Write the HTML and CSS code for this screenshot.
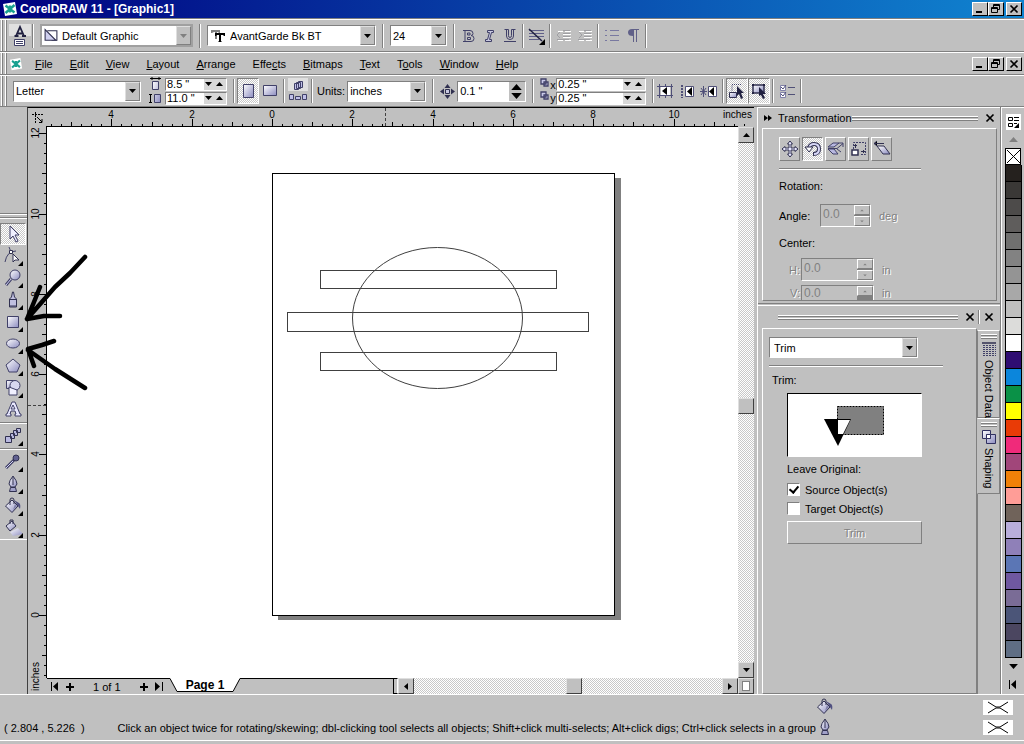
FILE: index.html
```html
<!DOCTYPE html>
<html lang="en">
<head>
  <meta charset="UTF-8">
  <meta name="viewport" content="width=device-width, initial-scale=1.0">
  <title>CorelDRAW 11 - [Graphic1]</title>
  <link rel="stylesheet" href="styles.css">
</head>
<body>
  <!-- shared icons -->
  <svg class="defs" width="0" height="0" aria-hidden="true">
    <defs>
      <linearGradient id="lilac" x1="0" y1="0" x2="1" y2="1">
        <stop offset="0" stop-color="#ffffff"/>
        <stop offset="1" stop-color="#8c8cc0"/>
      </linearGradient>
      <symbol id="down" viewBox="0 0 7 4"><path d="M0 0h7L3.500 4z"/></symbol>
      <symbol id="up" viewBox="0 0 7 4"><path d="M0 4h7L3.500 0z"/></symbol>
      <symbol id="min" viewBox="0 0 12 10"><path d="M2 7h6v2H2z"/></symbol>
      <symbol id="restore" viewBox="0 0 12 10"><path fill="none" stroke="#000" d="M3.500 3V.5h6v5H8M3 1.500h7M1.500 3.500h6v5h-6zM1 4.500h7"/></symbol>
      <symbol id="close" viewBox="0 0 12 10"><path stroke="#000" stroke-width="1.700" d="M2.500 1.500l7 7M9.500 1.500l-7 7"/></symbol>
      <symbol id="logo" viewBox="0 0 16 16">
        <path fill="#fff" d="M1 3l12-2 2 12-12 2z"/>
        <path fill="none" stroke="#18a090" stroke-width="2.400" d="M3.500 4.500l9 7M12.500 4l-9 8M8 4.500v7"/>
      </symbol>
      <symbol id="bucket" viewBox="0 0 18 18">
        <path fill="url(#lilac)" stroke="#303050" d="M1.500 9L8 3l6 6-6 6.500z"/>
        <path fill="none" stroke="#303050" d="M6 8V3q0-2 2-2t2 2v4"/>
        <path fill="#505080" d="M10 3l5 3q2 1 1 6l-2-3z"/>
        <path fill="#8080a8" d="M9 13l4-4-2-2z"/>
      </symbol>
      <symbol id="pen" viewBox="0 0 18 18">
        <path fill="url(#lilac)" stroke="#303050" d="M9 1q-4 5-4 8l2 3h4l2-3q0-3-4-8z"/>
        <path fill="none" stroke="#303050" d="M9 2v8"/>
        <path fill="#a0a0c8" stroke="#303050" d="M6.500 12.500h5l1 4h-7z"/>
      </symbol>
      <symbol id="nofill" viewBox="0 0 30 15">
        <path fill="#fff" d="M0 0h30v15H0z"/>
        <path fill="none" stroke="#000" d="M5 2l8 5h4l8-5M5 13l8-5h4l8 5"/>
      </symbol>
      <symbol id="dup" viewBox="0 0 10 10"><path fill="#c8c8e8" stroke="#404068" stroke-width="1.300" d="M1 1h5v5H1zM4 4h4v4H4z"/></symbol>
    </defs>
  </svg>

  <header class="titlebar">
    <svg width="16" height="16"><use href="#logo"/></svg>
    <h1>CorelDRAW 11 - [Graphic1]</h1>
    <div class="winbtns">
      <button class="winbtn" aria-label="Minimize"><svg width="12" height="10"><use href="#min"/></svg></button>
      <button class="winbtn" aria-label="Restore"><svg width="12" height="10"><use href="#restore"/></svg></button>
      <button class="winbtn last" aria-label="Close"><svg width="12" height="10"><use href="#close"/></svg></button>
    </div>
  </header>

  <!-- text toolbar -->
  <div class="bar textbar">
    <span class="grip"></span>
    <button class="styles-btn" aria-label="Styles">
      <svg width="22" height="24" viewBox="0 0 22 24">
        <path fill="none" stroke="#202040" stroke-width="1.800" d="M7 12l4-9 4 9M8 9.500h6M5.500 12h4M13 12h4"/>
        <path fill="#fff" stroke="#404068" d="M5.500 15.500h10v6h-10z"/>
        <path stroke="#404068" d="M7 17.500h7M7 19.500h7"/>
      </svg>
    </button>
    <span class="sep"></span>
    <label class="combo combo-style off">
      <svg width="18" height="15" viewBox="0 0 16 14"><path fill="#fff" stroke="#303050" d="M4.500 2.500h9v9h-5"/><path fill="#d0d0f0" stroke="#303050" d="M2.500 1.500v10h10z"/></svg>
      <select aria-label="Style"><option>Default Graphic</option></select>
      <span class="drop"><svg width="7" height="4"><use href="#down"/></svg></span>
    </label>
    <span class="sep"></span>
    <label class="combo combo-font">
      <svg width="16" height="14" viewBox="0 0 16 14"><path fill="#808080" d="M1 1h9v3H9L8 3H7v7H5V3H4L2 4H1z"/><path d="M5 4h10v3h-1l-1-1h-2v6l1 1H8l1-1V6H7L6 7H5z"/></svg>
      <select aria-label="Font"><option>AvantGarde Bk BT</option></select>
      <span class="drop"><svg width="7" height="4"><use href="#down"/></svg></span>
    </label>
    <span class="sep"></span>
    <label class="combo combo-size">
      <select aria-label="Font size"><option>24</option></select>
      <span class="drop"><svg width="7" height="4"><use href="#down"/></svg></span>
    </label>
    <span class="sep"></span>
    <button class="tbtn" aria-label="Bold"><svg width="16" height="16" viewBox="0 0 16 16"><path fill="none" stroke="#404068" d="M3 2.500h7q3 0 3 3 0 2-2 2 3 0 3 3t-3 3H3M5 2v11M7.500 5v2h2.500V5zM7.500 9.500v2h3v-2z"/></svg></button>
    <button class="tbtn" aria-label="Italic"><svg width="16" height="16" viewBox="0 0 16 16"><path fill="#c8c8e0" stroke="#404068" d="M6.500 2.500h6v2h-2l-2 7h2v2h-6v-2h2l2-7h-2z"/></svg></button>
    <button class="tbtn" aria-label="Underline"><svg width="16" height="16" viewBox="0 0 16 16"><path fill="none" stroke="#404068" d="M2.500 1.500h4v6q0 2 1.500 2t1.500-2v-6h4M4.500 2v6q0 3.500 3.500 3.500t3.500-3.500V2M2 13.500h12"/></svg></button>
    <span class="sep"></span>
    <button class="tbtn" aria-label="Alignment"><svg width="18" height="18" viewBox="0 0 18 18"><path stroke="#606088" d="M1 3.500h15M1 6.500h15M1 9.500h15M1 12.500h10"/><path stroke="#202040" stroke-width="1.500" d="M1 2l13 12"/><path d="M17 12v6h-6z"/></svg></button>
    <span class="sep"></span>
    <button class="tbtn" disabled aria-label="Decrease indent"><svg width="18" height="16" viewBox="0 0 18 16"><path stroke="#fff" d="M3 3.500h5M10 3.500h6M8 6.500h8M8 9.500h8M3 12.500h5M10 12.500h6"/><path fill="none" stroke="#a0a0a4" d="M8 2.500h7M8 5.500h7M8 8.500h7M2 11.500h12M5 4L2 7l3 3"/></svg></button>
    <button class="tbtn" disabled aria-label="Increase indent"><svg width="18" height="16" viewBox="0 0 18 16"><path stroke="#fff" d="M3 3.500h5M10 3.500h6M8 6.500h8M8 9.500h8M3 12.500h5M10 12.500h6"/><path fill="none" stroke="#a0a0a4" d="M8 2.500h7M8 5.500h7M8 8.500h7M2 11.500h12M3 4l3 3-3 3"/></svg></button>
    <span class="sep"></span>
    <button class="tbtn" disabled aria-label="Bullets"><svg width="18" height="16" viewBox="0 0 18 16"><path stroke="#7878a0" d="M2 2.500h2M2 7.500h2M2 12.500h2M7 2.500h9M7 7.500h9M7 12.500h9"/></svg></button>
    <button class="tbtn" aria-label="Show non-printing characters"><svg width="16" height="16" viewBox="0 0 16 16"><path fill="#606088" d="M7 1h7v1h-2v12h-1V2H9v12H8V8Q3 8 3 4.500T7 1z"/></svg></button>
    <span class="sep"></span>
  </div>

  <nav class="bar menubar">
    <span class="grip"></span>
    <svg class="doc-logo" width="14" height="14"><use href="#logo"/></svg>
    <ul>
      <li><a href="#"><u>F</u>ile</a></li>
      <li><a href="#"><u>E</u>dit</a></li>
      <li><a href="#"><u>V</u>iew</a></li>
      <li><a href="#"><u>L</u>ayout</a></li>
      <li><a href="#"><u>A</u>rrange</a></li>
      <li><a href="#">Effe<u>c</u>ts</a></li>
      <li><a href="#"><u>B</u>itmaps</a></li>
      <li><a href="#"><u>T</u>ext</a></li>
      <li><a href="#">T<u>o</u>ols</a></li>
      <li><a href="#"><u>W</u>indow</a></li>
      <li><a href="#"><u>H</u>elp</a></li>
    </ul>
    <div class="winbtns">
      <button class="winbtn" aria-label="Minimize document"><svg width="12" height="10"><use href="#min"/></svg></button>
      <button class="winbtn" aria-label="Restore document"><svg width="12" height="10"><use href="#restore"/></svg></button>
      <button class="winbtn last" aria-label="Close document"><svg width="12" height="10"><use href="#close"/></svg></button>
    </div>
  </nav>

  <!-- property bar -->
  <div class="bar propbar">
    <span class="grip"></span>
    <label class="combo combo-paper">
      <select aria-label="Paper type"><option>Letter</option></select>
      <span class="drop"><svg width="7" height="4"><use href="#down"/></svg></span>
    </label>
    <svg class="size-ico" width="14" height="28" viewBox="0 0 14 28">
      <path fill="url(#lilac)" stroke="#404068" d="M4.500 4.500h6v8h-6zM6.500 17.500h6v8h-6z"/>
      <path fill="none" stroke="#000" d="M2 1.500h11M4 0v3M11 0v3M2.500 17v9M1 17.500h3M1 25.500h3"/>
    </svg>
    <div class="pair">
      <label class="spin"><input type="text" value='8.5 "' aria-label="Paper width"><svg width="7" height="4"><use href="#down"/></svg><svg width="7" height="4"><use href="#up"/></svg></label>
      <label class="spin"><input type="text" value='11.0 "' aria-label="Paper height"><svg width="7" height="4"><use href="#down"/></svg><svg width="7" height="4"><use href="#up"/></svg></label>
    </div>
    <span class="sep"></span>
    <button class="pbtn on" aria-label="Portrait"><svg width="16" height="18" viewBox="0 0 16 18"><path fill="url(#lilac)" stroke="#404068" d="M3.500 2.500h10v13h-10z"/></svg></button>
    <button class="pbtn" aria-label="Landscape"><svg width="16" height="18" viewBox="0 0 16 18"><path fill="url(#lilac)" stroke="#404068" d="M1.500 3.500h13v10h-13z"/></svg></button>
    <span class="sep"></span>
    <button class="pbtn" aria-label="Page options">
      <svg width="20" height="26" viewBox="0 0 20 26"><path fill="#fff" d="M0 0h20v13H0z" opacity=".5"/><path fill="#c0c0e8" stroke="#404068" d="M6.500 5.500h4v6h-4zM8.500 4.500h4v6h-4zM10.500 3.500h4v6h-4zM1.500 16.500h4v5h-4zM7.500 18.500h5v3h-5zM14.500 16.500h4v5h-4z"/></svg>
    </button>
    <span class="sep"></span>
    <label class="txt" for="units">Units:</label>
    <div class="combo combo-units">
      <select id="units"><option>inches</option></select>
      <span class="drop"><svg width="7" height="4"><use href="#down"/></svg></span>
    </div>
    <span class="sep"></span>
    <svg class="nudge-ico" width="15" height="15" viewBox="0 0 15 15"><path fill="#c8c8e0" stroke="#303050" d="M5.500 5.500h4v4h-4z"/><path fill="#303050" d="M7.500 0l3 4h-6zM7.500 15l3-4h-6zM0 7.500l4-3v6zM15 7.500l-4-3v6z"/></svg>
    <label class="combo combo-nudge">
      <input type="text" value='0.1 "' aria-label="Nudge offset">
      <span class="updown"><svg width="11" height="6"><use href="#up"/></svg><svg width="11" height="6"><use href="#down"/></svg></span>
    </label>
    <span class="sep"></span>
    <div class="dup-icos">
      <span><svg width="10" height="10"><use href="#dup"/></svg>x</span>
      <span><svg width="10" height="10"><use href="#dup"/></svg>y</span>
    </div>
    <div class="pair wide">
      <label class="spin"><input type="text" value='0.25 "' aria-label="Duplicate distance x"><svg width="7" height="4"><use href="#down"/></svg><svg width="7" height="4"><use href="#up"/></svg></label>
      <label class="spin"><input type="text" value='0.25 "' aria-label="Duplicate distance y"><svg width="7" height="4"><use href="#down"/></svg><svg width="7" height="4"><use href="#up"/></svg></label>
    </div>
    <span class="sep"></span>
    <button class="pbtn" aria-label="Snap to grid"><svg width="18" height="16" viewBox="0 0 18 16"><path stroke="#505078" d="M1 3.500h16M1 12.500h16M3.500 1v14M9.500 1v14M15.500 1v14"/><path fill="#fff" d="M5 4h9v8H5z"/><path d="M11 4v8L6 8z"/></svg></button>
    <button class="pbtn" aria-label="Snap to guidelines"><svg width="18" height="16" viewBox="0 0 18 16"><path stroke="#505078" stroke-dasharray="2 1" stroke-width="2" d="M4 2v13"/><path fill="#fff" stroke="#505078" d="M7.500 3.500h8v10h-8z"/><path d="M14 4v9L9 8.500z"/></svg></button>
    <button class="pbtn" aria-label="Snap to objects"><svg width="18" height="16" viewBox="0 0 18 16"><path stroke="#505078" d="M1 5l5 7M6 5l-5 7M3.500 3v11M0 8.500h7"/><path fill="#fff" stroke="#505078" d="M8.500 3.500h8v10h-8z"/><path d="M14 4v9L9 8.500z"/></svg></button>
    <span class="sep"></span>
    <button class="pbtn on" aria-label="Draw complex objects"><svg width="18" height="18" viewBox="0 0 18 18"><path fill="url(#lilac)" stroke="#303050" d="M1.500 10.500h7v5h-7z"/><path fill="none" stroke="#404068" stroke-dasharray="1 1" d="M4 8.500v-6h9"/><path fill="#202040" d="M9 4l7 7h-3l2 5-2 1-2-5-2 2z"/></svg></button>
    <button class="pbtn on" aria-label="Treat as filled"><svg width="18" height="18" viewBox="0 0 18 18"><path fill="url(#lilac)" stroke="#303050" stroke-width="1.500" d="M3 3h11v8H3z"/><path fill="#202040" d="M2 2h2v2H2zM13 2h2v2h-2zM2 10h2v2H2zM9 5l7 7h-3l2 4-2 1-2-4-2 1z"/></svg></button>
    <span class="sep"></span>
    <button class="pbtn" aria-label="Options"><svg width="18" height="16" viewBox="0 0 18 16"><path fill="#fff" stroke="#8080a8" d="M2.500 2.500h5v5h-5zM2.500 9.500h5v5h-5z"/><path fill="none" stroke="#505078" d="M3 4l2 2 3-4M3 11l2 2 3-4M10 4.500h7M10 11.500h7"/></svg></button>
    <span class="sep"></span>
  </div>

  <main class="work">
    <aside class="toolbox">
      <div class="tools">
        <button class="tool on" aria-label="Pick tool"><svg width="22" height="20" viewBox="0 0 22 20"><path fill="#f0f0ff" stroke="#404068" d="M8 2v13l3-3 3 6 2-1-3-6h4z"/></svg></button>
        <button class="tool fly" aria-label="Shape tool"><svg width="22" height="20" viewBox="0 0 22 20"><path fill="none" stroke="#404068" d="M3 16q2-11 11-11M7 1l2 5"/><path fill="#fff" stroke="#303050" d="M7.500 4.500h3v3h-3zM11 8l6 6h-4l-2 2z"/></svg></button>
        <button class="tool fly" aria-label="Zoom tool"><svg width="22" height="20" viewBox="0 0 22 20"><path stroke="#404068" stroke-width="3" d="M9 11l-5 6"/><path stroke="#d0d0f0" d="M9 11l-5 6"/><circle cx="13" cy="7" r="5" fill="url(#lilac)" stroke="#404068"/></svg></button>
        <button class="tool fly" aria-label="Freehand tool"><svg width="22" height="20" viewBox="0 0 22 20"><path fill="#c0c0e0" stroke="#303050" d="M9.500 7l1-5h1l1 5 2 2v8h-7V9zM8 9.500h6M8 16h6"/></svg></button>
        <button class="tool fly" aria-label="Rectangle tool"><svg width="22" height="20" viewBox="0 0 22 20"><path fill="url(#lilac)" stroke="#404068" d="M5.500 4.500h11v11h-11z"/></svg></button>
        <button class="tool fly" aria-label="Ellipse tool"><svg width="22" height="20" viewBox="0 0 22 20"><ellipse cx="11" cy="9.500" rx="6.500" ry="4.500" fill="url(#lilac)" stroke="#404068"/></svg></button>
        <button class="tool fly" aria-label="Polygon tool"><svg width="22" height="20" viewBox="0 0 22 20"><path fill="url(#lilac)" stroke="#404068" d="M11 3l7 6-3 7H7L4 9z"/></svg></button>
        <button class="tool fly" aria-label="Basic shapes"><svg width="22" height="20" viewBox="0 0 22 20"><path fill="url(#lilac)" stroke="#404068" d="M4.500 2.500h8v8h-8z"/><circle cx="13" cy="7.500" r="5" fill="#d8d8f0" stroke="#404068"/><path fill="#f0f0ff" stroke="#404068" d="M7 9l8 3v5H7z"/></svg></button>
        <button class="tool" aria-label="Text tool"><svg width="22" height="20" viewBox="0 0 22 20"><path fill="#e8e8ff" stroke="#404068" d="M10 2h3l5 12h1v2h-6v-2h1l-1-3H9l-1 3h1v2H4v-2h1zM11 5l2 4H9z"/></svg></button>
        <hr>
        <button class="tool fly" aria-label="Interactive blend"><svg width="22" height="20" viewBox="0 0 22 20"><path fill="#b8b8e0" stroke="#303050" d="M3.500 10.500h6v6h-6zM8.500 7.500h4v5h-4zM11.500 4.500h4v5h-4zM14.500 2.500h4v4h-4z"/></svg></button>
        <hr>
        <button class="tool fly" aria-label="Eyedropper"><svg width="22" height="20" viewBox="0 0 22 20"><path stroke="#404068" stroke-width="3" d="M4 16l8-8"/><path stroke="#d0d0f0" d="M4 16l7-7"/><circle cx="14" cy="6" r="3" fill="#606090" stroke="#303050"/></svg></button>
        <button class="tool fly" aria-label="Outline tool"><svg width="18" height="18"><use href="#pen"/></svg></button>
        <button class="tool fly" aria-label="Fill tool"><svg width="18" height="18"><use href="#bucket"/></svg></button>
        <button class="tool fly" aria-label="Interactive fill"><svg width="22" height="20" viewBox="0 0 22 20"><path fill="url(#lilac)" d="M8 14l8-4 5 6-10 2z"/><path fill="url(#lilac)" stroke="#303050" d="M4 8l6-5 4 5-6 5z"/><path fill="none" stroke="#303050" d="M8 6V2h3v4"/></svg></button>
      </div>
    </aside>

    <section class="document">
      <div class="corner"><svg width="14" height="14" viewBox="0 0 14 14"><path fill="none" stroke="#000" stroke-dasharray="2 1" d="M1 3.500h11M4.500 1v11"/><path fill="none" stroke="#000" d="M6 6l5 5M11 8v3.500H8"/></svg></div>
      <svg class="ruler-x" id="rulerX" width="100%" height="18"></svg>
      <svg class="ruler-y" id="rulerY" width="18" height="100%"></svg>

      <div class="canvas">
        <svg width="100%" height="100%" shape-rendering="crispEdges">
          <path fill="#808080" d="M568 51h6v442H231v-5h337z"/>
          <rect x="225.500" y="46.500" width="342" height="442" fill="#fff" stroke="#000"/>
          <g fill="none" stroke="#404040">
            <rect x="273.500" y="143.500" width="236" height="18"/>
            <rect x="240.500" y="185.500" width="301" height="19"/>
            <rect x="273.500" y="225.500" width="236" height="18"/>
            <ellipse cx="390.500" cy="191" rx="85" ry="70.500" shape-rendering="auto"/>
          </g>
        </svg>
      </div>

      <div class="vscroll">
        <button class="sbtn" aria-label="Scroll up"><svg width="7" height="4"><use href="#up"/></svg></button>
        <span class="track before"></span>
        <span class="thumb"></span>
        <span class="track"></span>
        <button class="sbtn" aria-label="Scroll down"><svg width="7" height="4"><use href="#down"/></svg></button>
      </div>

      <div class="pagebar">
        <div class="pager">
          <button aria-label="First page"><svg width="10" height="9" viewBox="0 0 10 9"><path d="M1 0h1v9H1zM8 0v9L3 4.500z"/></svg></button>
          <button aria-label="Add page before"><svg width="8" height="8" viewBox="0 0 8 8"><path d="M3 0h2v3h3v2H5v3H3V5H0V3h3z"/></svg></button>
          <span class="count">1 of 1</span>
          <button aria-label="Add page after"><svg width="8" height="8" viewBox="0 0 8 8"><path d="M3 0h2v3h3v2H5v3H3V5H0V3h3z"/></svg></button>
          <button aria-label="Last page"><svg width="10" height="9" viewBox="0 0 10 9"><path d="M8 0h1v9H8zM1 0v9l5-4.500z"/></svg></button>
        </div>
        <div class="page-tab">
          <svg width="70" height="15" viewBox="0 0 70 15"><path fill="#fff" d="M0 0h70l-7 13.500H7z"/><path fill="none" stroke="#000" d="M0 .5l7 13h56l7-13"/></svg>
          <button>Page 1</button>
        </div>
        <span class="tab-rest"></span>
        <div class="hscroll">
          <span class="splitter"></span>
          <button class="sbtn" aria-label="Scroll left"><svg width="4" height="7" viewBox="0 0 4 7"><path d="M4 0v7L0 3.500z"/></svg></button>
          <span class="track before"></span>
          <span class="thumb"></span>
          <span class="track"></span>
          <button class="sbtn" aria-label="Scroll right"><svg width="4" height="7" viewBox="0 0 4 7"><path d="M0 0v7l4-3.500z"/></svg></button>
        </div>
      </div>
      <button class="navigator" aria-label="Navigator"></button>
    </section>

    <section class="dockers">
      <div class="docker transform">
        <div class="docker-head">
          <svg width="8" height="6" viewBox="0 0 8 6"><path d="M0 0l4 3-4 3zM4 0l4 3-4 3z"/></svg>
          <h2>Transformation</h2>
          <span class="lines"></span>
          <button class="x" aria-label="Close Transformation"><svg width="12" height="10"><use href="#close"/></svg></button>
        </div>
        <div class="docker-body">
          <div class="modes">
            <button class="mode" aria-label="Position"><svg width="18" height="18" viewBox="0 0 18 18"><path fill="#e8e8ff" stroke="#303050" d="M9 1l2.500 3H10v4h4V6.500L17 9l-3 2.500V10h-4v4h1.500L9 17l-2.500-3H8v-4H4v1.500L1 9l3-2.500V8h4V4H6.500z"/></svg></button>
            <button class="mode on" aria-label="Rotate"><svg width="18" height="18" viewBox="0 0 18 18"><path fill="none" stroke="#303050" stroke-width="4" d="M5 8q1-4 5-4 5 0 5 5t-6 5"/><path fill="none" stroke="#d8d8f8" stroke-width="2" d="M5 8q1-4 5-4 5 0 5 5t-5 5"/><path fill="#fff" stroke="#303050" d="M1 7h8l-4 5z"/></svg></button>
            <button class="mode" aria-label="Scale and mirror"><svg width="18" height="18" viewBox="0 0 18 18"><path fill="#b8b8e0" stroke="#404068" d="M1 7l5-4h6l-5 4zM1 9h6l4 5H6z"/><path fill="none" stroke="#404068" d="M1 8.500h9l6-5M12 3h4v4M10 9l4 3"/></svg></button>
            <button class="mode" aria-label="Size"><svg width="18" height="18" viewBox="0 0 18 18"><path fill="none" stroke="#404068" stroke-dasharray="2 1" d="M3.500 9V2.500h12v12H10"/><path fill="#fff" stroke="#303050" stroke-width="1.500" d="M2 10h6v5H2z"/><path stroke="#303050" d="M5.500 4v4M4 5.500h3M11 11.500h4M13.500 10v3"/></svg></button>
            <button class="mode" aria-label="Skew"><svg width="18" height="18" viewBox="0 0 18 18"><path fill="url(#lilac)" stroke="#303050" d="M4 6h7l6 8h-7z"/><path stroke="#303050" d="M1 3.500h10M4 1L1 3.500 4 6"/></svg></button>
          </div>
          <hr>
          <h3>Rotation:</h3>
          <div class="field">
            <label for="angle">Angle:</label>
            <span class="numbox small"><input id="angle" type="text" value="0.0" disabled><span class="arrows"><svg width="14" height="9" viewBox="0 0 14 9"><path d="M5 6h4L7 4z"/></svg><svg width="14" height="9" viewBox="0 0 14 9"><path d="M5 4h4L7 6z"/></svg></span></span>
            <span class="unit">deg</span>
          </div>
          <h3>Center:</h3>
          <div class="field sub">
            <label for="ch">H:</label>
            <span class="numbox"><input id="ch" type="text" value="0.0" disabled><span class="arrows"><svg width="14" height="9" viewBox="0 0 14 9"><path d="M5 6h4L7 4z"/></svg><svg width="14" height="9" viewBox="0 0 14 9"><path d="M5 4h4L7 6z"/></svg></span></span>
            <span class="unit">in</span>
          </div>
          <div class="field sub cut">
            <label for="cv">V:</label>
            <span class="numbox"><input id="cv" type="text" value="0.0" disabled><span class="arrows"><svg width="14" height="9" viewBox="0 0 14 9"><path d="M5 6h4L7 4z"/></svg></span></span>
            <span class="unit">in</span>
          </div>
        </div>
      </div>

      <div class="docker shaping">
        <div class="docker-head">
          <span class="lines"></span>
          <button class="x" aria-label="Close Shaping"><svg width="12" height="10"><use href="#close"/></svg></button>
          <span class="xsep"></span>
          <button class="x" aria-label="Close group"><svg width="12" height="10"><use href="#close"/></svg></button>
        </div>
        <div class="shaping-row">
          <div class="docker-body">
            <label class="combo combo-trim">
              <select aria-label="Operation"><option>Trim</option></select>
              <span class="drop"><svg width="7" height="4"><use href="#down"/></svg></span>
            </label>
            <hr>
            <h3>Trim:</h3>
            <div class="trim">
              <div class="preview">
                <svg width="132" height="61" viewBox="0 0 132 61">
                  <path fill="#808080" stroke="#000" stroke-dasharray="2 1" d="M49.500 12.500h46v28h-46z"/>
                  <path d="M36 25h27L50 52z"/>
                  <path fill="#fff" d="M50 26h12l-7 14h-5z"/>
                </svg>
              </div>
              <h3>Leave Original:</h3>
              <label class="check"><input type="checkbox" checked>Source Object(s)</label>
              <label class="check"><input type="checkbox">Target Object(s)</label>
              <button class="apply" disabled>Trim</button>
            </div>
          </div>
          <div class="tabs">
            <button class="tab"><svg width="14" height="14" viewBox="0 0 14 14"><path stroke="#303050" stroke-width="1.500" d="M0 1h14"/><path stroke="#404068" stroke-dasharray="2 1" d="M1 3.500h13M1 5.500h13M1 7.500h13M1 9.500h13M1 11.500h13M1 13.500h13"/></svg><span>Object Data</span></button>
            <button class="tab front"><svg width="14" height="14" viewBox="0 0 14 14"><path fill="url(#lilac)" stroke="#303060" d="M.5 .5h8v8h-8zM4.500 4.500h9v9h-9z"/><path fill="#fff" stroke="#303060" d="M4.500 4.500h4v4h-4z"/></svg><span>Shaping</span></button>
            <span class="tabs-rest"></span>
          </div>
        </div>
      </div>
    </section>

    <aside class="palette">
      <button class="pal-menu" aria-label="Palette menu"><svg width="15" height="16" viewBox="0 0 15 16"><path fill="#fff" d="M0 0h15v16H0z"/><path fill="none" stroke="#000" d="M2.500 3.500h4v3h-4zM2.500 9.500h4v3h-4zM8 3.500h5M8 6.500h5M8 9.500h3"/><path d="M13 9v5H8z"/></svg></button>
      <button class="pal-btn off" aria-label="Scroll palette up"><svg width="9" height="5"><use href="#up"/></svg></button>
      <button class="no-color" aria-label="No color"><svg width="13" height="13" viewBox="0 0 13 13"><path stroke="#000" d="M0 0l13 13M13 0L0 13"/></svg></button>
      <div id="swatches" class="swatches"></div>
      <button class="pal-btn" aria-label="Scroll palette down"><svg width="9" height="5"><use href="#down"/></svg></button>
      <button class="pal-btn" aria-label="Expand palette"><svg width="8" height="9" viewBox="0 0 8 9"><path d="M0 0h1v9H0zM7 0v9L2 4.500z"/></svg></button>
    </aside>

    <!-- hand drawn arrows over the toolbox -->
    <svg class="marks" width="70" height="145" viewBox="0 0 70 145">
      <path fill="none" stroke="#000" stroke-width="4.500" stroke-linecap="round" stroke-linejoin="round" d="M65 8L50 24 35 38 7 70M20 38l-6 15-7 17 17-3 16 0M65 139L35 120 8 101M34 92l-12 4-14 4 6 17"/>
    </svg>
  </main>

  <footer class="status">
    <span class="coords">( 2.804 , 5.226&nbsp; )</span>
    <span class="hint">Click an object twice for rotating/skewing; dbl-clicking tool selects all objects; Shift+click multi-selects; Alt+click digs; Ctrl+click selects in a group</span>
    <div class="state">
      <svg width="18" height="18"><use href="#bucket"/></svg>
      <svg width="18" height="18"><use href="#pen"/></svg>
    </div>
    <div class="none">
      <svg width="30" height="15"><use href="#nofill"/></svg>
      <svg width="30" height="15"><use href="#nofill"/></svg>
    </div>
  </footer>

  <script src="script.js"></script>
</body>
</html>
```
FILE: styles.css
```css
* {
  box-sizing: border-box;
}
body {
  display: flex;
  flex-direction: column;
  height: 100vh;
  margin: 0;
  overflow: hidden;
  background: #c0c0c0;
  color: #000;
  font: 11px/14px "Liberation Sans", Arial, sans-serif;
}
button, input, select {
  margin: 0;
  padding: 0;
  border: 0;
  border-radius: 0;
  background: none;
  color: inherit;
  font: inherit;
}
button {
  display: flex;
  align-items: center;
  justify-content: center;
}
select {
  appearance: none;
  outline: 0;
}
h1, h2, h3 {
  margin: 0;
  font-size: 11px;
  font-weight: normal;
}
svg {
  display: block;
  flex: none;
}
.defs {
  position: absolute;
}

/* title bar */
.titlebar {
  display: flex;
  align-items: center;
  flex: none;
  height: 19px;
  padding: 0 2px;
  border-bottom: 1px solid #808080;
  background: linear-gradient(to right, #000080, #1084d0);
  color: #fff;
}
.titlebar h1 {
  margin-left: 2px;
  font-size: 12px;
  font-weight: bold;
}
.winbtns {
  display: flex;
  margin-left: auto;
}
.winbtn {
  width: 16px;
  height: 14px;
  border: 1px solid;
  border-color: #fff #000 #000 #fff;
  background: #c0c0c0;
}
.winbtn.last {
  margin-left: 2px;
}

/* toolbars */
.bar {
  display: flex;
  align-items: center;
  flex: none;
  border-top: 1px solid #fff;
  border-bottom: 1px solid #808080;
}
.textbar {
  height: 33px;
}
.menubar {
  height: 23px;
  padding-right: 2px;
}
.propbar {
  height: 32px;
}
.grip {
  flex: none;
  align-self: stretch;
  width: 7px;
  margin-right: 2px;
  background: linear-gradient(to right, #c0c0c0 1px, #fff 1px, #fff 2px, #808080 2px, #808080 3px, #c0c0c0 3px, #c0c0c0 5px, #fff 5px, #fff 6px, #808080 6px);
}
.sep {
  flex: none;
  width: 2px;
  height: 24px;
  margin: 0 6px;
  border-left: 1px solid #808080;
  border-right: 1px solid #fff;
}
.styles-btn {
  background: linear-gradient(#e0e0e0 12px, #c0c0c0 12px);
}
.styles-btn + .sep {
  margin-left: 1px;
}
.combo {
  display: flex;
  align-items: center;
  flex: none;
  height: 21px;
  border: 1px solid;
  border-color: #808080 #fff #fff #808080;
  background: #fff;
}
.combo select, .combo input {
  flex: 1;
  min-width: 0;
  padding-left: 2px;
}
.drop {
  display: flex;
  align-items: center;
  justify-content: center;
  width: 15px;
  height: 100%;
  border: 1px solid;
  border-color: #dfdfdf #808080 #808080 #dfdfdf;
  background: #c0c0c0;
}
.off .drop {
  fill: #808080;
}
.combo-style {
  width: 153px;
  height: 23px;
  border: 2px solid #a0a0a0;
}
.combo-font {
  width: 169px;
}
.combo-font svg {
  margin: 0 2px;
}
.combo-size {
  width: 57px;
}
.tbtn {
  width: 21px;
  height: 22px;
}
.tbtn + .sep, .pbtn + .sep {
  margin: 0 2px;
}
.combo-size + .sep, .pair + .sep {
  margin-right: 2px;
}

/* menu */
.menubar ul {
  display: flex;
  gap: 17px;
  margin: 0 0 0 12px;
  padding: 0;
  list-style: none;
}
.menubar a {
  color: #000;
  text-decoration: none;
}

/* property bar */
.combo-paper {
  width: 128px;
  margin-left: 4px;
}
.size-ico {
  margin: 0 3px 0 7px;
}
.pair {
  display: flex;
  flex-direction: column;
  flex: none;
  gap: 1px;
  width: 62px;
}
.pair.wide {
  width: 90px;
}
.pair.wide + .sep {
  margin-right: 0;
}
.spin {
  display: flex;
  align-items: center;
  gap: 4px;
  height: 13px;
  padding-right: 3px;
  border: 1px solid;
  border-color: #808080 #fff #fff #808080;
  background: linear-gradient(to left, #d8d8d8 22px, #fff 22px);
}
.spin input {
  flex: 1;
  min-width: 0;
  height: 11px;
  padding-left: 1px;
}
.pbtn {
  width: 22px;
  height: 26px;
}
.pbtn.on, .tool.on, .mode.on {
  border: 1px solid;
  border-color: #808080 #fff #fff #808080;
  background: repeating-conic-gradient(#fff 0 25%, #c8c8c8 0 50%) 0 0 / 2px 2px;
}
.txt {
  margin: 0 2px;
}
.combo-units {
  width: 79px;
}
.nudge-ico {
  margin-right: 2px;
}
.combo-nudge {
  width: 69px;
}
.updown {
  display: flex;
  flex-direction: column;
  gap: 3px;
  width: 16px;
  padding: 2px;
  background: #c0c0c0;
}
.dup-icos {
  display: flex;
  flex-direction: column;
  width: 16px;
}
.dup-icos span {
  display: flex;
  height: 13px;
}

/* work area */
.work {
  position: relative;
  display: flex;
  flex: 1;
  min-height: 0;
}
.toolbox {
  flex: none;
  width: 27px;
  padding-top: 106px;
}
.tools {
  padding-top: 10px;
  border-bottom: 1px solid #fff;
  background: linear-gradient(#808080 1px, #fff 1px, #fff 2px, #c0c0c0 2px, #c0c0c0 4px, #808080 4px, #808080 5px, #fff 5px, #fff 6px, #c0c0c0 6px);
}
.tools hr {
  margin: 1px 0;
  border: 0;
  border-top: 1px solid #808080;
  border-bottom: 1px solid #fff;
}
.tool {
  position: relative;
  width: 26px;
  height: 22px;
}
.fly::after {
  content: "";
  position: absolute;
  right: 3px;
  bottom: 1px;
  border-left: 5px solid transparent;
  border-bottom: 5px solid #000;
}
.marks {
  position: absolute;
  left: 20px;
  top: 142px;
  pointer-events: none;
}

/* document window */
.document {
  display: grid;
  grid-template: 19px 1fr 16px / 19px 1fr 16px;
  flex: 1;
  min-width: 0;
  margin-right: 3px;
  border-top: 1px solid #000;
  border-left: 1px solid #404040;
}
.corner {
  display: flex;
  align-items: center;
  justify-content: center;
}
.ruler-x {
  grid-column: 2 / 4;
  align-self: start;
}
.ruler-y {
  grid-row: 2 / 4;
  grid-column: 1;
}
.ruler-x text, .ruler-y text {
  font-size: 10px;
}
.canvas {
  grid-row: 2;
  grid-column: 2;
  min-height: 0;
  border-top: 1px solid #000;
  border-left: 1px solid #000;
  margin: -1px 0 0 -1px;
  background: #fff;
  overflow: hidden;
}
.vscroll {
  grid-row: 2;
  grid-column: 3;
  display: flex;
  flex-direction: column;
}
.sbtn, .thumb, .navigator {
  flex: none;
  width: 16px;
  height: 16px;
  border: 1px solid;
  border-color: #dfdfdf #404040 #404040 #dfdfdf;
  background: #c0c0c0;
}
.track {
  flex: 35;
  background: repeating-conic-gradient(#fff 0 25%, #c8c8c8 0 50%) 0 0 / 2px 2px;
}
.track.before {
  flex: 36;
}
.hscroll .track.before {
  flex: 38;
}
.pagebar {
  grid-row: 3;
  grid-column: 2;
  display: flex;
  min-width: 0;
}
.pager {
  display: flex;
  align-items: center;
  gap: 6px;
  width: 123px;
  padding-left: 3px;
  border-top: 1px solid #000;
}
.count {
  margin: 0 13px;
}
.page-tab {
  display: grid;
  flex: none;
}
.page-tab > * {
  grid-area: 1 / 1;
}
.page-tab button {
  height: 13px;
  font-size: 12px;
  font-weight: bold;
}
.tab-rest {
  flex: 1;
  border-top: 1px solid #000;
}
.hscroll {
  display: flex;
  width: 50%;
}
.splitter {
  width: 5px;
  border: 1px solid;
  border-color: #000 #fff #000 #000;
}
.navigator {
  grid-row: 3;
  grid-column: 3;
  padding: 3px;
}
.navigator::before {
  content: "";
  width: 8px;
  height: 8px;
  border: 1px solid #808080;
  background: #fff;
}

/* dockers */
.dockers {
  display: flex;
  flex-direction: column;
  flex: none;
  width: 244px;
  border-left: 1px solid #fff;
  border-right: 1px solid #808080;
}
.docker {
  padding: 0 3px 0 4px;
  border-top: 1px solid #fff;
}
.docker-head {
  display: flex;
  align-items: center;
  height: 20px;
  padding-left: 2px;
}
.docker-head h2 {
  margin-left: 6px;
}
.lines {
  flex: 1;
  height: 5px;
  margin-right: 4px;
  background: linear-gradient(#fff 1px, #808080 1px, #808080 2px, #c0c0c0 2px, #c0c0c0 3px, #fff 3px, #fff 4px, #808080 4px);
}
.x {
  width: 15px;
  height: 14px;
}
.xsep {
  width: 2px;
  height: 14px;
  margin: 0 1px;
  border-left: 1px solid #808080;
  border-right: 1px solid #fff;
}
.docker-body {
  border: 1px solid #808080;
  border-color: #fff #808080 #808080 #fff;
}
.docker-body hr {
  margin: 0;
  border: 0;
  border-top: 1px solid #808080;
  border-bottom: 1px solid #fff;
}
.transform {
  flex: none;
  height: 197px;
  border-bottom: 1px solid #808080;
}
.transform .docker-body {
  padding: 8px 0 0 16px;
}
.modes {
  display: flex;
  gap: 2px;
}
.mode {
  width: 21px;
  height: 24px;
  border: 1px solid;
  border-color: #fff #808080 #808080 #fff;
}
.transform hr {
  width: 142px;
  margin: 7px 0 9px;
}
.field {
  display: flex;
  align-items: center;
  margin: 11px 0 9px;
}
.field label {
  width: 41px;
}
.field.sub {
  margin: 8px 0 0;
}
.sub label {
  width: 22px;
  padding-right: 1px;
  text-align: right;
}
.sub label, .unit {
  color: #808080;
  text-shadow: 1px 1px #fff;
}
.unit {
  margin-left: 8px;
}
.numbox {
  display: flex;
  width: 73px;
  height: 23px;
  border: 1px solid;
  border-color: #808080 #fff #fff #808080;
}
.numbox.small {
  width: 51px;
}
.numbox input {
  flex: 1;
  min-width: 0;
  padding: 0 0 4px 2px;
  color: #808080;
  font-size: 12px;
}
.arrows {
  display: flex;
  flex-direction: column;
  gap: 1px;
  background: #808080;
}
.arrows svg {
  width: 16px;
  height: 10px;
  border: 1px solid;
  border-color: #fff #808080 #808080 #fff;
  background: #c0c0c0;
  fill: #808080;
}
/* last row shows only the top of its box */
.field.cut {
  margin-top: 4px;
}
.cut .numbox {
  height: 15px;
  border-bottom: 0;
}
.cut .numbox input {
  padding-bottom: 0;
}
.shaping {
  display: flex;
  flex-direction: column;
  flex: 1;
  min-height: 0;
  margin-top: 1px;
  padding-right: 0;
}
.shaping .docker-head {
  height: 22px;
  padding: 0 4px 0 16px;
}
.shaping-row {
  display: flex;
  flex: 1;
  min-height: 0;
}
.shaping .docker-body {
  flex: 1;
  padding: 8px 0 0 6px;
}
.combo-trim {
  width: 149px;
}
.combo-trim select {
  padding-left: 4px;
}
.shaping hr {
  width: 174px;
  margin: 7px 0 6px;
}
.shaping h3 {
  margin-left: 3px;
}
.trim {
  width: 135px;
  margin: 6px 0 0 18px;
}
.preview {
  height: 64px;
  margin-bottom: 5px;
  border: 1px solid;
  border-color: #000 #fff #fff #000;
  background: #fff;
}
.trim h3 {
  margin: 0 0 4px;
}
.check {
  display: flex;
  align-items: center;
  gap: 5px;
  height: 19px;
}
.check input {
  appearance: none;
  width: 13px;
  height: 13px;
  background: #fff;
  border: 1px solid;
  border-color: #808080 #fff #fff #808080;
}
.check input:checked::before {
  content: "";
  display: block;
  width: 4px;
  height: 7px;
  margin: 0 0 0 3px;
  border: solid #000;
  border-width: 0 2px 2px 0;
  transform: rotate(40deg);
}
.apply {
  width: 100%;
  height: 23px;
  margin-top: 3px;
  border: 1px solid;
  border-color: #fff #808080 #808080 #fff;
  color: #808080;
  text-shadow: 1px 1px #fff;
}
.tabs {
  display: flex;
  flex-direction: column;
  width: 23px;
  padding-top: 2px;
}
.tab {
  flex-direction: column;
  justify-content: flex-start;
  gap: 4px;
  height: 88px;
  padding-top: 11px;
  border: 1px solid;
  border-color: #fff #808080 #808080;
  background: linear-gradient(#fff 1px, #808080 1px, #808080 2px, #c0c0c0 2px, #c0c0c0 3px, #fff 3px, #fff 4px, #808080 4px, #808080 5px, #c0c0c0 5px) 50% 3px / 16px 6px no-repeat;
}
.tab.front {
  height: 76px;
  border-left-color: #c0c0c0;
}
.tab span {
  writing-mode: vertical-rl;
  white-space: nowrap;
}
.tabs-rest {
  flex: 1;
  border-left: 1px solid #808080;
}

/* color palette */
.palette {
  display: flex;
  flex-direction: column;
  align-items: center;
  flex: none;
  width: 23px;
  padding-top: 6px;
  border-top: 1px solid #fff;
  border-left: 1px solid #fff;
}
.pal-btn {
  height: 19px;
}
.pal-btn.off {
  fill: #808080;
}
.no-color {
  width: 16px;
  height: 17px;
  border: 1px solid #000;
  background: #fff;
}
.swatches {
  border: solid #000;
  border-width: 0 1px;
}
.swatch {
  width: 15px;
  height: 17px;
  border-bottom: 1px solid #000;
}

/* status bar */
.status {
  display: flex;
  flex: none;
  height: 50px;
  border-top: 1px solid #fff;
  box-shadow: inset 0 -3px #c0c0c0, inset 0 -4px #fff;
}
.coords, .hint {
  padding-top: 26px;
  white-space: nowrap;
}
.coords {
  width: 115px;
  padding-left: 4px;
}
.hint {
  flex: 1;
  padding-left: 3px;
}
.state {
  display: flex;
  flex-direction: column;
  gap: 2px;
  width: 168px;
  padding-top: 3px;
}
.none {
  display: flex;
  flex-direction: column;
  gap: 5px;
  width: 41px;
  padding-top: 5px;
}
```
FILE: script.js
```js
(function () {
  var NS = 'http://www.w3.org/2000/svg';
  var INCH = 40.15; // screen pixels per inch

  function add(parent, name, attrs, text) {
    var el = document.createElementNS(NS, name);
    for (var key in attrs) el.setAttribute(key, attrs[key]);
    if (text) el.textContent = text;
    parent.appendChild(el);
  }

  // length of the tick at q quarter inches
  function tick(q) {
    if (q % 8 === 0) return 7;
    if (q % 4 === 0) return 4;
    return 2;
  }

  var x = document.getElementById('rulerX');
  for (var q = -22; q <= 47; q++) {
    var px = Math.round(225 + q * INCH / 4);
    add(x, 'rect', { x: px, y: 18 - tick(q), width: 1, height: tick(q) });
    if (q % 8 === 0 && q <= 40) {
      add(x, 'text', { x: px, y: 10, 'text-anchor': 'middle' }, String(Math.abs(q / 4)));
    }
  }
  add(x, 'text', { x: 676, y: 10 }, 'inches');
  add(x, 'path', { d: 'M338.500 0v18', stroke: '#404040', 'stroke-dasharray': '3 2' });

  var y = document.getElementById('rulerY');
  for (q = -6; q <= 48; q++) {
    var py = Math.round(488 - q * INCH / 4);
    add(y, 'rect', { x: 18 - tick(q), y: py, width: tick(q), height: 1 });
    if (q % 8 === 0) {
      add(y, 'text', { transform: 'translate(11 ' + py + ') rotate(-90)', 'text-anchor': 'middle' }, String(q / 4));
    }
  }
  add(y, 'text', { transform: 'translate(11 564) rotate(-90)' }, 'inches');
  add(y, 'path', { d: 'M0 278.500h18', stroke: '#404040', 'stroke-dasharray': '3 2' });

  var colors = [
    '#25211e', '#3a3836', '#4d4b4a', '#5f5d5c', '#70706f', '#828282', '#949494', '#a8a8a8',
    '#bfbfbe', '#dcdcda', '#ffffff', '#2f0d72', '#0b86dc', '#0a9147', '#ffff00', '#e93b06',
    '#f02a7a', '#a1467a', '#f08108', '#ff9d97', '#70635a', '#b9aedb', '#8f80b8', '#5b76b5',
    '#6f58a0', '#7a6c96', '#4b5578', '#4b4660', '#5f6e84'
  ];
  var box = document.getElementById('swatches');
  colors.forEach(function (color) {
    var b = document.createElement('button');
    b.className = 'swatch';
    b.style.background = color;
    b.setAttribute('aria-label', color);
    box.appendChild(b);
  });
})();
```
